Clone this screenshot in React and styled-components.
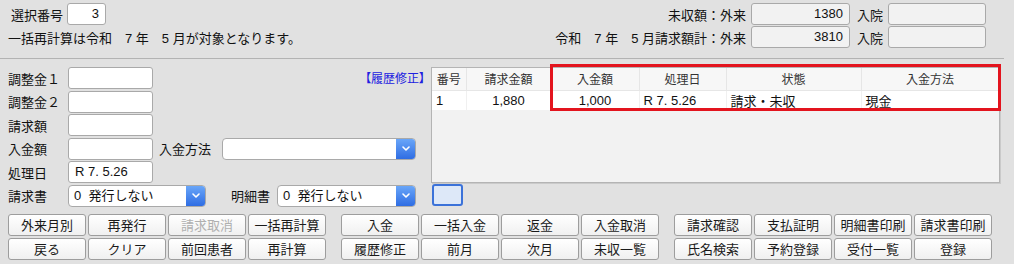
import styled, { createGlobalStyle } from "styled-components"

const GlobalStyle = createGlobalStyle`
    html, body {
        margin: 0;
        padding: 0;
        background: #e1e1e1;
    }
    * {
        box-sizing: border-box;
    }
`

const StyledPage = styled.div`
    width: 1014px;
    height: 264px;
    padding-top: 3px;
    background: #e1e1e1;
    font-family: "Liberation Sans", "Noto Sans CJK JP", sans-serif;
    font-size: 13px;
    color: #111;
    overflow: hidden;
`

const StyledTop = styled.div`
    display: flex;
    justify-content: space-between;
    padding: 0 28px 0 8px;
`

const StyledTopLeft = styled.div`
    display: grid;
    grid-template-rows: 22px 22px;
    row-gap: 1px;
    align-items: center;
`

const StyledTopRow = styled.div`
    display: flex;
    align-items: center;
    white-space: pre;
`

const StyledTopLabel = styled.span`
    width: 59px;
    padding-left: 3px;
`

const StyledTopRight = styled.div`
    display: grid;
    grid-template-columns: auto 99px auto 98px;
    grid-template-rows: 22px 22px;
    column-gap: 5px;
    row-gap: 1px;
    align-items: center;
`

const StyledRightLabel = styled.span`
    justify-self: end;
    white-space: pre;
    padding-left: ${props => props.$pad || 0}px;
`

const StyledInput = styled.div`
    width: ${props => props.$w}px;
    height: 22px;
    line-height: 20px;
    border: 1px solid #a9a9a9;
    border-radius: 3px;
    background: ${props => props.$readonly ? "#f2f2f2" : "#fff"};
    text-align: ${props => props.$right ? "right" : "left"};
    padding: 0 6px;
    font-size: 13px;
    color: #111;
`

const StyledRule = styled.div`
    height: 1px;
    margin: 10px 10px 0 0;
    background: #b3b3b3;
`

const StyledMiddle = styled.div`
    display: flex;
    gap: 6px;
    padding: 8px 0 0 8px;
`

const StyledForm = styled.div`
    width: 417px;
    display: flex;
    flex-direction: column;
    gap: 1.5px;
`

const StyledFormRow = styled.div`
    display: flex;
    align-items: center;
    height: 22px;
`

const StyledLabel = styled.span`
    width: ${props => props.$w || 60}px;
    margin-left: ${props => props.$ml || 0}px;
    flex-shrink: 0;
`

const StyledHistory = styled.span`
    margin-left: auto;
    align-self: flex-start;
    padding-top: 2px;
    color: #2020e0;
    font-size: 12px;
    font-feature-settings: "palt";
`

const StyledSelect = styled.div`
    width: ${props => props.$w}px;
    height: 22px;
    display: flex;
    border: 1px solid #a9a9a9;
    border-radius: 4px;
    background: #fff;
    overflow: hidden;
`

const StyledSelectText = styled.span`
    flex: 1;
    line-height: 20px;
    padding-left: 5px;
    white-space: pre;
    color: #111;
`

const StyledSelectButton = styled.span`
    width: 19px;
    display: flex;
    align-items: center;
    justify-content: center;
    background: linear-gradient(#69a6f9, #2f6de3);
`

const StyledTablePanel = styled.div`
    width: 569px;
    display: flex;
    flex-direction: column;
    gap: 1px;
`

const StyledTableFrame = styled.div`
    position: relative;
    height: 116px;
    background: #f2f2f2;
    border: 1px solid #b4b4b4;
    box-shadow: 1px 1px 0 #cacaca;
`

const StyledTable = styled.table`
    width: 100%;
    border-collapse: collapse;
    table-layout: fixed;
`

const StyledTh = styled.th`
    height: 22px;
    padding: 0;
    background: #f7f7f7;
    border-right: 1px solid #e6e6e6;
    border-bottom: 1px solid #e6e6e6;
    font-size: 12px;
    font-weight: normal;
    color: #333;
    text-align: center;
`

const StyledTd = styled.td`
    height: 18px;
    padding: 0 4px;
    background: #fff;
    border-right: 1px solid #f0f0f0;
    text-align: ${props => props.$align || "left"};
    font-size: 13px;
    color: #111;
`

const StyledMark = styled.div`
    position: absolute;
    left: 118px;
    top: -4px;
    width: 451px;
    height: 47px;
    border: 3px solid #e3141e;
    pointer-events: none;
`

const StyledSmallBox = styled.div`
    width: 31px;
    height: 22px;
    margin-left: 1px;
    border: 2px solid #3b72d9;
    border-radius: 3px;
    background: #dde8f8;
`

const StyledButtons = styled.div`
    display: flex;
    gap: 15px;
    padding: 7px 0 0 8px;
`

const StyledGroup = styled.div`
    display: grid;
    grid-template-columns: repeat(4, 78px);
    grid-auto-rows: 22px;
    gap: 2px;
`

const StyledButton = styled.button`
    padding: 0;
    border: 1px solid #9d9d9d;
    border-radius: 3px;
    background: linear-gradient(#ffffff, #f0f0f0);
    font-family: inherit;
    font-size: 13px;
    color: ${props => props.disabled ? "#b0b0b0" : "#1a1a1a"};
`

const Chevron = () => (
    <svg width="8" height="5" viewBox="0 0 8 5">
        <path d="M1 1l3 3 3-3" fill="none" stroke="#fff" strokeWidth="1.6" strokeLinecap="round" strokeLinejoin="round" />
    </svg>
)

const Select = ( props ) => (
    <StyledSelect $w={props.w}>
        <StyledSelectText>{props.value}</StyledSelectText>
        <StyledSelectButton><Chevron /></StyledSelectButton>
    </StyledSelect>
)

const groups = [
    ["外来月別", "再発行", "請求取消", "一括再計算", "戻る", "クリア", "前回患者", "再計算"],
    ["入金", "一括入金", "返金", "入金取消", "履歴修正", "前月", "次月", "未収一覧"],
    ["請求確認", "支払証明", "明細書印刷", "請求書印刷", "氏名検索", "予約登録", "受付一覧", "登録"],
]

const columns = [
    { title: "番号", width: 34 },
    { title: "請求金額", width: 85 },
    { title: "入金額", width: 88 },
    { title: "処理日", width: 87 },
    { title: "状態", width: 135 },
    { title: "入金方法", width: 138 },
]

export default function App() {
    return (
        <>
            <GlobalStyle />
            <StyledPage>
                <StyledTop>
                    <StyledTopLeft>
                        <StyledTopRow>
                            <StyledTopLabel>選択番号</StyledTopLabel>
                            <StyledInput $w={39} $right>3</StyledInput>
                        </StyledTopRow>
                        <StyledTopRow>一括再計算は令和　7 年　5 月が対象となります。</StyledTopRow>
                    </StyledTopLeft>
                    <StyledTopRight>
                        <StyledRightLabel>未収額：外来</StyledRightLabel>
                        <StyledInput $w={99} $readonly $right>1380</StyledInput>
                        <StyledRightLabel $pad={2}>入院</StyledRightLabel>
                        <StyledInput $w={98} $readonly />
                        <StyledRightLabel>令和　7 年　5 月請求額計：外来</StyledRightLabel>
                        <StyledInput $w={99} $readonly $right>3810</StyledInput>
                        <StyledRightLabel $pad={2}>入院</StyledRightLabel>
                        <StyledInput $w={98} $readonly />
                    </StyledTopRight>
                </StyledTop>
                <StyledRule />
                <StyledMiddle>
                    <StyledForm>
                        <StyledFormRow>
                            <StyledLabel>調整金１</StyledLabel>
                            <StyledInput $w={85} />
                            <StyledHistory>【履歴修正】</StyledHistory>
                        </StyledFormRow>
                        <StyledFormRow>
                            <StyledLabel>調整金２</StyledLabel>
                            <StyledInput $w={85} />
                        </StyledFormRow>
                        <StyledFormRow>
                            <StyledLabel>請求額</StyledLabel>
                            <StyledInput $w={85} />
                        </StyledFormRow>
                        <StyledFormRow>
                            <StyledLabel>入金額</StyledLabel>
                            <StyledInput $w={85} />
                            <StyledLabel $ml={6} $w={63}>入金方法</StyledLabel>
                            <Select w={194} value="" />
                        </StyledFormRow>
                        <StyledFormRow>
                            <StyledLabel>処理日</StyledLabel>
                            <StyledInput $w={85}>R 7. 5.26</StyledInput>
                        </StyledFormRow>
                        <StyledFormRow>
                            <StyledLabel>請求書</StyledLabel>
                            <Select w={138} value="0  発行しない" />
                            <StyledLabel $ml={25} $w={46}>明細書</StyledLabel>
                            <Select w={139} value="0  発行しない" />
                        </StyledFormRow>
                    </StyledForm>
                    <StyledTablePanel>
                        <StyledTableFrame>
                            <StyledTable>
                                <colgroup>
                                    {columns.map(c => <col key={c.title} style={{ width: c.width }} />)}
                                </colgroup>
                                <thead>
                                    <tr>
                                        {columns.map(c => <StyledTh key={c.title}>{c.title}</StyledTh>)}
                                    </tr>
                                </thead>
                                <tbody>
                                    <tr>
                                        <StyledTd>1</StyledTd>
                                        <StyledTd $align="center">1,880</StyledTd>
                                        <StyledTd $align="center">1,000</StyledTd>
                                        <StyledTd>R 7. 5.26</StyledTd>
                                        <StyledTd>請求・未収</StyledTd>
                                        <StyledTd>現金</StyledTd>
                                    </tr>
                                </tbody>
                            </StyledTable>
                            <StyledMark />
                        </StyledTableFrame>
                        <StyledSmallBox />
                    </StyledTablePanel>
                </StyledMiddle>
                <StyledButtons>
                    {groups.map((g, i) => (
                        <StyledGroup key={i}>
                            {g.map(label => (
                                <StyledButton key={label} disabled={label === "請求取消"}>{label}</StyledButton>
                            ))}
                        </StyledGroup>
                    ))}
                </StyledButtons>
            </StyledPage>
        </>
    )
}
